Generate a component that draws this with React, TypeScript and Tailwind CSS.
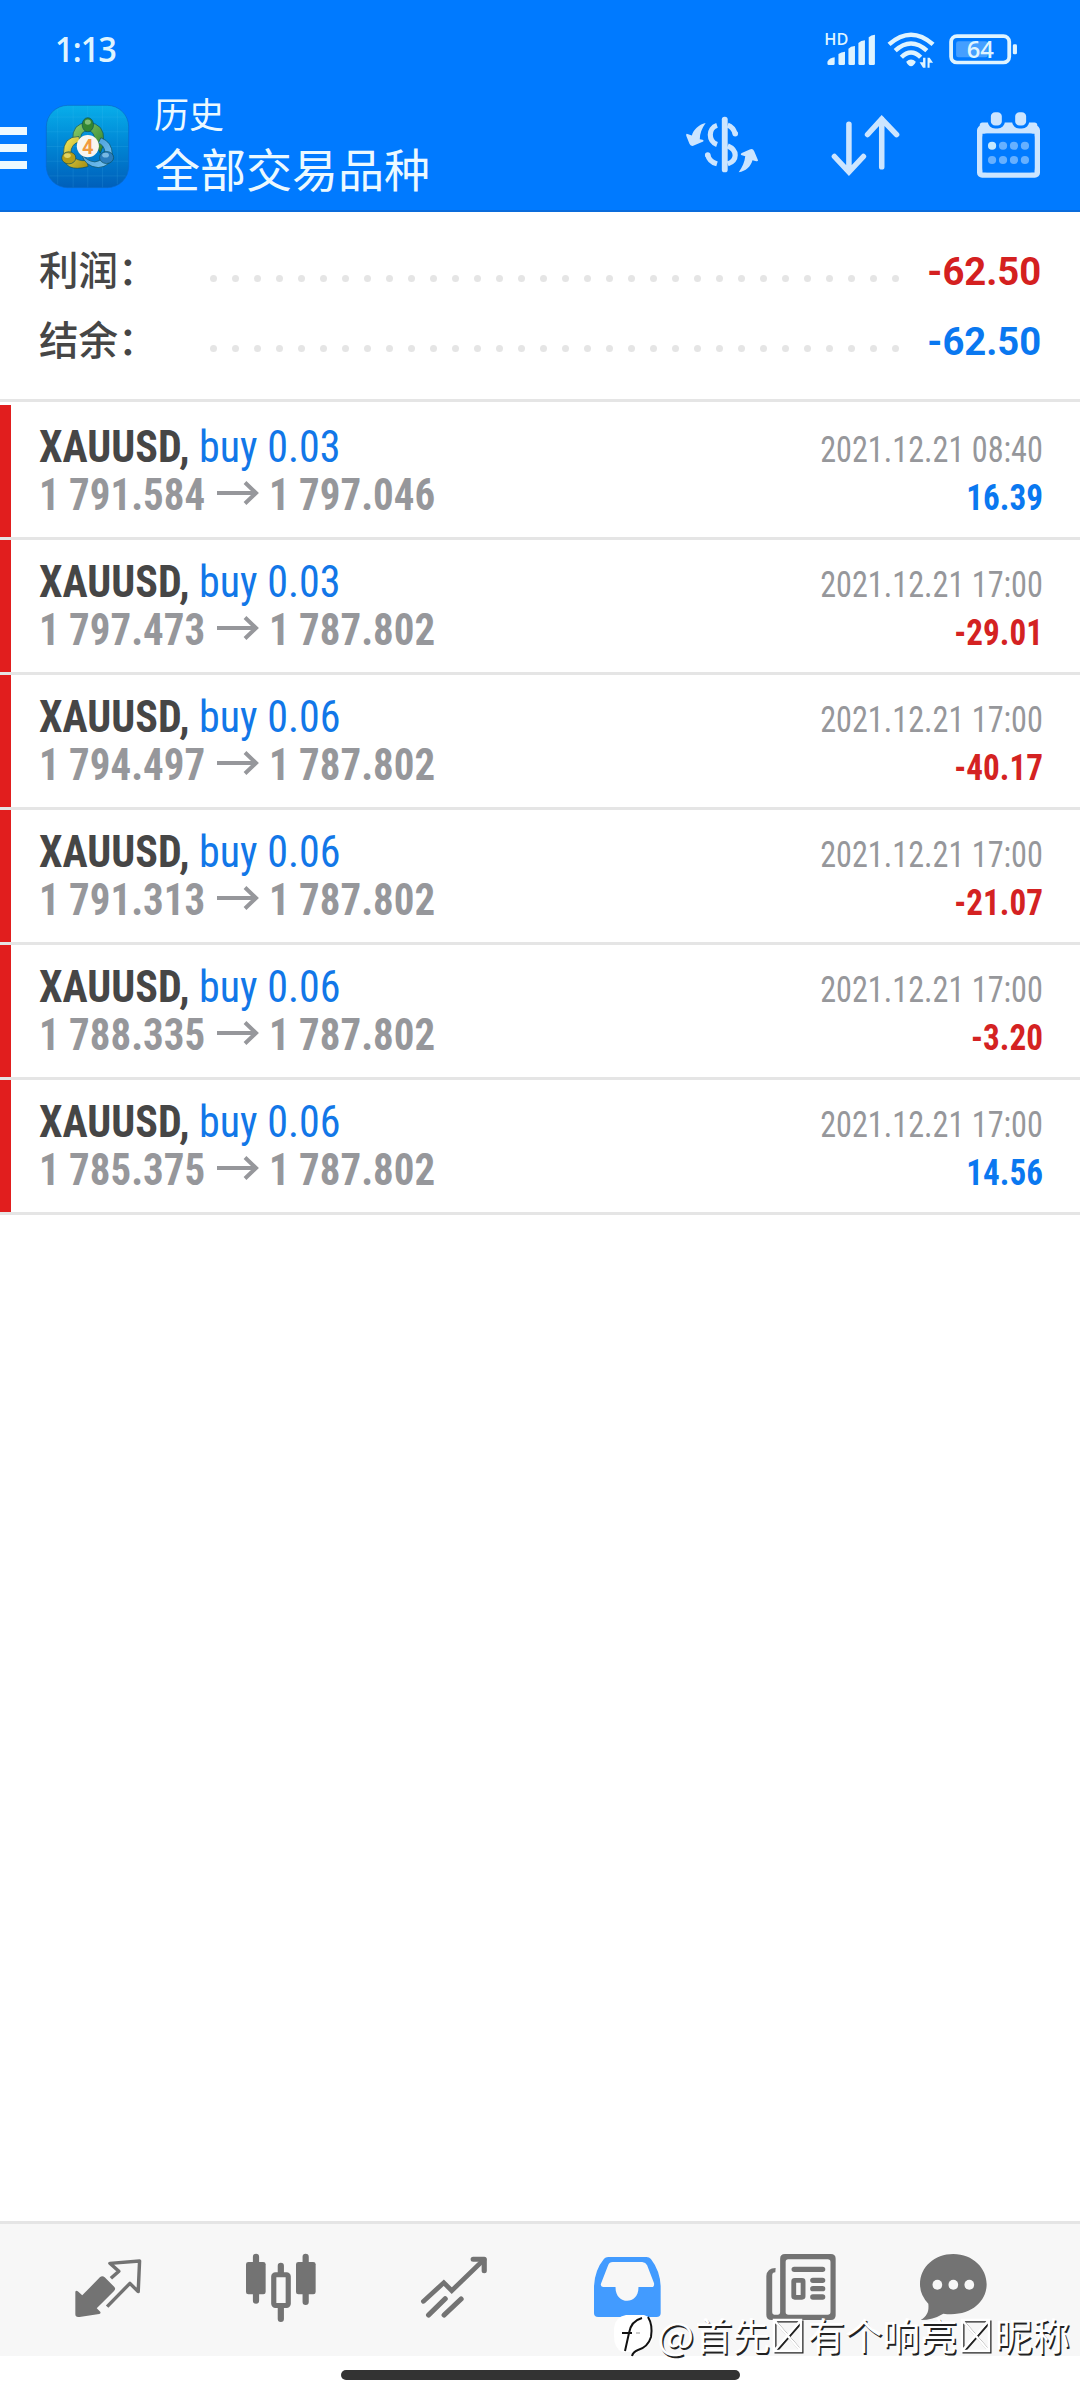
import type { ReactNode } from "react";

type Deal = {
    lot: string;
    open: string;
    close: string;
    time: string;
    profit: string;
};

const deals: Deal[] = [
    { lot: "0.03", open: "1 791.584", close: "1 797.046", time: "2021.12.21 08:40", profit: "16.39" },
    { lot: "0.03", open: "1 797.473", close: "1 787.802", time: "2021.12.21 17:00", profit: "-29.01" },
    { lot: "0.06", open: "1 794.497", close: "1 787.802", time: "2021.12.21 17:00", profit: "-40.17" },
    { lot: "0.06", open: "1 791.313", close: "1 787.802", time: "2021.12.21 17:00", profit: "-21.07" },
    { lot: "0.06", open: "1 788.335", close: "1 787.802", time: "2021.12.21 17:00", profit: "-3.20" },
    { lot: "0.06", open: "1 785.375", close: "1 787.802", time: "2021.12.21 17:00", profit: "14.56" },
];

const Icon = ({ box, className, children }: { box: string; className: string; children: ReactNode }) => (
    <svg viewBox={box} preserveAspectRatio="none" className={`block shrink-0 overflow-visible ${className}`} fill="none">
        {children}
    </svg>
);

const StatusBar = () => (
    <div className="flex h-[96px] items-start pl-[55px] pr-[62px] text-[#dff4ff]">
        <div className="mt-[29px] origin-left scale-x-[0.93] font-['Open_Sans',sans-serif] text-[35px] font-semibold leading-[40px] tracking-[-1px]">1:13</div>
        <Icon box="824 92 564 114" className="ml-auto mt-[31px] h-[38px] w-[194px]">
            <text x="825" y="135" fontSize="48" fontWeight="600" fontFamily="Open Sans, sans-serif" fill="currentColor" textLength="70" lengthAdjust="spacingAndGlyphs">HD</text>
            <g fill="currentColor">
                <path d="M834 190V184Q841 172 855 171V190Q855 194 851 194H838Q834 194 834 190Z" />
                <path d="M866 190V161Q874 155 885 154V190Q885 194 881 194H870Q866 194 866 190Z" />
                <path d="M895 190V145Q901 138 914 137V190Q914 194 910 194H899Q895 194 895 190Z" />
                <path d="M924 190V128Q931 121 943 120V190Q943 194 939 194H928Q924 194 924 190Z" />
                <path d="M954 190V111Q961 104 972 103V190Q972 194 968 194H958Q954 194 954 190Z" />
                <path d="M1063 184Q1077 171 1091 184Q1085 197 1077 198Q1069 197 1063 184Z" />
                <path d="M1112 172H1119V202H1112L1102 186H1112ZM1125 202V172H1131L1141 187H1131V202Z" />
                <rect x="1373" y="132" width="12" height="30" rx="4" />
                <rect x="1208" y="123" width="92" height="48" rx="7" fill="#459fff" />
            </g>
            <g stroke="currentColor">
                <path d="M1013 132Q1077 74 1141 132M1031 151Q1077 108 1123 151M1049 171Q1077 142 1105 171" strokeWidth="13" />
                <rect x="1193.500" y="107.500" width="169" height="79" rx="17" strokeWidth="11" />
            </g>
            <text x="1239" y="173" fontSize="68" fontWeight="600" fontFamily="Open Sans, sans-serif" fill="currentColor" textLength="79" lengthAdjust="spacingAndGlyphs">64</text>
        </Icon>
    </div>
);

const AppLogo = () => (
    <Icon box="50 44 248 248" className="ml-[19px] h-[83px] w-[83px]">
        <defs>
            <linearGradient id="tile" x1="0" y1="0" x2="0" y2="1">
                <stop offset="0" stopColor="#08aeea" />
                <stop offset="0.45" stopColor="#0088d6" />
                <stop offset="1" stopColor="#005fba" />
            </linearGradient>
            <linearGradient id="green" x1="0" y1="0" x2="1" y2="1">
                <stop offset="0" stopColor="#8fd06c" />
                <stop offset="1" stopColor="#2a7f2b" />
            </linearGradient>
            <linearGradient id="yellow" x1="0" y1="0" x2="1" y2="1">
                <stop offset="0" stopColor="#f3ea5c" />
                <stop offset="1" stopColor="#a58c10" />
            </linearGradient>
            <linearGradient id="sky" x1="0" y1="0" x2="1" y2="1">
                <stop offset="0" stopColor="#3a93d6" />
                <stop offset="1" stopColor="#7cc6f2" />
            </linearGradient>
        </defs>
        <rect x="51" y="45" width="246" height="246" rx="64" fill="url(#tile)" stroke="#0a68c8" strokeWidth="2" />
        <path d="M85 56V280M131 46V290M175 46V290M219 46V290M263 56V280M60 80H288M52 124H296M52 168H296M52 212H296M60 256H288" stroke="#5cc8f5" strokeOpacity="0.2" strokeWidth="2" />
        <g stroke="#0b4e5c" strokeWidth="2">
            <path d="M130 150Q126 98 176 96Q226 100 222 150Q222 170 212 188L196 154Q196 122 175 121Q154 122 154 142L138 154Z" fill="url(#green)" />
            <path d="M102 190Q101 138 148 138L152 154Q124 158 124 190Q140 214 172 210L176 228Q102 248 102 190Z" fill="url(#yellow)" />
            <path d="M156 190Q172 212 196 214Q224 210 226 182Q222 162 206 158L214 142Q248 154 248 192Q244 228 206 231Q166 228 156 190Z" fill="url(#sky)" />
            <ellipse cx="175" cy="103" rx="17" ry="21" fill="#328632" />
            <ellipse cx="118" cy="202" rx="21" ry="18" fill="#b59d18" />
            <ellipse cx="231" cy="201" rx="21" ry="18" fill="#2a7dbd" />
        </g>
        <ellipse cx="175" cy="95" rx="9" ry="8" fill="#a3d597" fillOpacity="0.7" />
        <ellipse cx="114" cy="195" rx="10" ry="7" fill="#f4eb84" fillOpacity="0.7" />
        <ellipse cx="228" cy="194" rx="10" ry="7" fill="#98d3f4" fillOpacity="0.7" />
        <circle cx="175" cy="167" r="33" fill="#f8f5f0" />
        <text x="175" y="189" textAnchor="middle" fontSize="60" fontWeight="700" fontFamily="Roboto, sans-serif" fill="#f19a3e">4</text>
    </Icon>
);

const Header = () => (
    <header className="h-[212px] border-b-2 border-[#0a6cdc] bg-[#007aff]">
        <StatusBar />
        <div className="flex h-[114px] items-start text-[#ecf9ff]">
            <div className="mt-[31px] flex w-[27px] flex-col gap-[9px]">
                <span className="h-2 bg-current" />
                <span className="h-2 bg-current" />
                <span className="h-2 bg-current" />
            </div>
            <div className="mt-[9px]">
                <AppLogo />
            </div>
            <div className="-mt-[2px] ml-[25px] font-['Noto_Sans_CJK_SC',sans-serif] font-normal">
                <div className="text-[35px] leading-[38px]">历史</div>
                <div className="mt-2 text-[46px] leading-[54px]">全部交易品种</div>
            </div>
            <div className="ml-auto mr-[40px] flex items-start text-[#cce5ff]">
                <Icon box="424 348 209 170" className="mt-5 h-[57px] w-[72px]">
                    <rect x="528" y="350" width="17" height="166" rx="8" fill="currentColor" />
                    <path d="M514 376C488 384 488 424 514 433M545 375C556 379 563 388 567 401M545 437C574 450 574 480 545 491M487 464C490 478 500 487 514 491" stroke="currentColor" strokeWidth="15" />
                    <circle cx="567" cy="401" r="8" fill="currentColor" />
                    <circle cx="487" cy="464" r="8" fill="currentColor" />
                    <path d="M481 369C460 374 446 389 441 406L426 401Q423 403 425 408L434 431Q437 439 445 437L474 424Q477 421 472 419L464 417C464 400 470 385 481 369Z" fill="currentColor" />
                    <path d="M577 516C588 500 594 485 596 468L584 464Q581 461 586 458L609 448Q618 444 622 453L633 480Q633 484 628 483L617 480C611 500 598 512 577 516Z" fill="currentColor" />
                </Icon>
                <Icon box="847 349 194 175" className="ml-[74px] mt-5 h-[59px] w-[67px]">
                    <path d="M896 373V514M854 469L896 515L938 469M991 500V358M950 404L991 358L1034 404" stroke="currentColor" strokeWidth="16" strokeLinecap="round" />
                </Icon>
                <Icon box="1268 335 184 197" className="ml-[78px] mt-4 h-[66px] w-[63px]">
                    <rect x="1276" y="382.500" width="168" height="141" rx="7" stroke="currentColor" strokeWidth="16" />
                    <rect x="1276" y="366" width="168" height="34" rx="8" fill="currentColor" />
                    <path d="M1284 412Q1284 399 1297 399H1423Q1436 399 1436 412V502Q1436 515 1423 515H1297Q1284 515 1284 502Z" fill="#007aff" />
                    <rect x="1304" y="331" width="41" height="49" rx="17" fill="currentColor" stroke="#007aff" strokeWidth="9" />
                    <rect x="1375" y="331" width="41" height="49" rx="17" fill="currentColor" stroke="#007aff" strokeWidth="9" />
                    <circle cx="1312" cy="436" r="12" fill="#c6e9ff" />
                    {[1344, 1376, 1408].map((x) => (
                        <circle key={x} cx={x} cy="436" r="12" fill="#66b0ff" />
                    ))}
                    {[1312, 1344, 1376, 1408].map((x) => (
                        <circle key={x} cx={x} cy="478" r="12" fill="#66b0ff" />
                    ))}
                </Icon>
            </div>
        </div>
    </header>
);

const SummaryRow = ({ label, value, color }: { label: string; value: string; color: string }) => (
    <div className="flex h-[70px] items-start">
        <div className="w-[171px] font-['Noto_Sans_CJK_SC',sans-serif] text-[39.5px] font-medium leading-[65px] text-[#464646]">{label}</div>
        <div className="mt-[40px] flex w-[689px] justify-between">
            {Array.from({ length: 32 }).map((_, i) => (
                <span key={i} className="size-[7px] rounded-full bg-[#e5e5e5]" />
            ))}
        </div>
        <div className={`ml-auto origin-right scale-x-[0.98] font-['Roboto',sans-serif] text-[39px] font-bold leading-[75px] ${color}`}>{value}</div>
    </div>
);

const DealRow = ({ deal }: { deal: Deal }) => (
    <div className="flex h-[135px] border-b-[3px] border-[#e5e5e5] font-['Roboto_Condensed','Roboto',sans-serif] [font-stretch:75%]">
        <div className="w-[11px] bg-[#e11e1e]" />
        <div className="ml-[28px] w-[420px] pt-[18px] text-[44px] leading-[48px]">
            <div className="origin-left scale-x-[0.955] whitespace-pre">
                <span className="font-bold text-[#464646]">XAUUSD,</span>
                <span className="font-[450] text-[#1277e8]"> buy {deal.lot}</span>
            </div>
            <div className="flex items-center font-bold text-[#96979b]">
                <span className="w-[178px] origin-left scale-x-[0.93] whitespace-nowrap">{deal.open}</span>
                <Icon box="0 0 42 24" className="-mt-1 h-6 w-[42px]">
                    <path d="M0 12H39M28 1.500L39 12L28 22.500" stroke="currentColor" strokeWidth="4" />
                </Icon>
                <span className="ml-[10px] origin-left scale-x-[0.93] whitespace-nowrap">{deal.close}</span>
            </div>
        </div>
        <div className="ml-auto mr-[37px] pt-[21px] text-right text-[36px] leading-[48px]">
            <div className="origin-right scale-x-[0.895] text-[#96979b]">{deal.time}</div>
            <div className={`origin-right scale-x-[0.92] font-bold ${deal.profit.startsWith("-") ? "text-[#d42222]" : "text-[#0a78f0]"}`}>{deal.profit}</div>
        </div>
    </div>
);

const TabBar = () => (
    <nav className="flex h-[135px] items-start border-t-[3px] border-[#e5e5e5] bg-[#f7f7f7] pt-[30px] text-[#737373]">
        <Icon box="218 162 194 204" className="ml-[75px] h-[68px] w-[67px]">
            <path d="M219 276Q220 270 226 274L239 286L290 232Q297 225 304 232L332 261Q337 267 331 273L281 325L291 335Q294 340 288 342L231 351Q219 353 219 343Z" fill="currentColor" />
            <path d="M322 235L345 214L319 190L405 183L401 275L377 250L311 320" stroke="currentColor" strokeWidth="10" strokeLinejoin="round" />
        </Icon>
        <Icon box="715 162 203 204" className="ml-[104px] h-[68px] w-[70px]">
            <path d="M744 170V302M888 170V306M816 197V222M816 320V357" stroke="currentColor" strokeWidth="18" strokeLinecap="round" />
            <rect x="715" y="186" width="57" height="97" rx="7" fill="currentColor" />
            <rect x="860" y="186" width="57" height="97" rx="7" fill="currentColor" />
            <rect x="795.500" y="224.500" width="42" height="92" rx="5" fill="#f7f7f7" stroke="currentColor" strokeWidth="15" />
        </Icon>
        <Icon box="1223 162 191 204" className="ml-[105px] h-[68px] w-[66px]">
            <path d="M1230 304L1289 248L1312 272L1405 179" stroke="currentColor" strokeWidth="14" strokeLinecap="round" />
            <path d="M1374 178H1406V212M1245 345L1293 296M1290 345L1339 297" stroke="currentColor" strokeWidth="15" strokeLinecap="round" strokeLinejoin="round" />
        </Icon>
        <Icon box="158 162 193 204" className="ml-[107px] h-[68px] w-[67px]">
            <path fillRule="evenodd" d="M158 258Q160 210 187 176Q191 171 199 171H309Q317 171 322 177Q348 212 350 258V340Q350 351 338 351H170Q158 351 158 340ZM199 195Q202 186 212 186H297Q307 187 311 196L331 250Q332 261 325 261H286C288 316 219 316 220 261H184Q176 260 178 251Z" fill="#429bff" />
        </Icon>
        <Icon box="656 162 203 204" className="ml-[105px] h-[68px] w-[70px]">
            <path d="M684 204L683 217Q674 217 674 226V337Q674 344 680 344H691Q697 344 697 337V176Q697 162 711 162H844Q858 162 858 176V346Q858 360 844 360H672Q657 360 657 345V228Q659 204 684 204ZM720 178Q713 178 713 186V336Q713 344 721 344H835Q843 344 843 336V186Q843 178 835 178Z" fillRule="evenodd" fill="currentColor" />
            <path d="M738 208H820M792 241H820M792 266H820M792 291H820" stroke="currentColor" strokeWidth="16" strokeLinecap="round" />
            <rect x="736.500" y="241" width="27" height="51" rx="3" stroke="currentColor" strokeWidth="14" />
        </Icon>
        <Icon box="1103 162 193 204" className="ml-[84px] h-[68px] w-[67px]">
            <path d="M1199 162C1256 162 1295 205 1295 253C1295 306 1246 352 1170 341Q1140 360 1105 360C1125 347 1129 332 1127 311Q1103 285 1103 253C1103 201 1145 162 1199 162Z" fill="currentColor" />
            {[1153, 1199, 1245].map((x) => (
                <ellipse key={x} cx={x} cy="254" rx="14" ry="15" fill="#f7f7f7" />
            ))}
        </Icon>
    </nav>
);

// square with a diagonal cross, stands in for glyphs the watermark font lacks
const MissingGlyph = () => (
    <Icon box="0 0 37.5 38" className="h-[38px] w-[37.5px]">
        <path d="M4 5H31V36H4ZM4 5L31 36M31 5L4 36" stroke="#222" strokeWidth="2" transform="translate(1.500 1.500)" />
        <path d="M4 5H31V36H4ZM4 5L31 36M31 5L4 36" stroke="#fff" strokeWidth="2.500" />
    </Icon>
);

const Watermark = () => (
    <div className="absolute bottom-[42px] right-[10px] flex h-[48px] items-center font-['Noto_Sans_CJK_SC',sans-serif] text-[37.5px] font-normal leading-[44px] text-white [text-shadow:1.5px_1.5px_0_#222]">
        <Icon box="0 0 44 48" className="mt-2 h-12 w-11">
            <path d="M12 1H30Q38 3 39 14V22Q38 33 26 36L19 42L17 38L8 38Q0 34 0 22V14Q1 3 12 1Z" fill="#fff" />
            <path d="M11 37L15 19Q17 7 28 4M8 19H18M34 3Q39 11 37 23Q34 33 24 36Q19 38 18 42" stroke="#111" strokeWidth="2" />
            <path d="M22 19H26" stroke="#ccc" strokeWidth="2" />
        </Icon>
        <span className="mr-[2px] inline-block scale-x-[1.04]">@</span>
        <span>首先</span>
        <MissingGlyph />
        <span>有个响亮</span>
        <MissingGlyph />
        <span>昵称</span>
    </div>
);

export default function App() {
    return (
        <div className="relative flex h-[2400px] w-[1080px] flex-col overflow-hidden bg-white">
            <Header />
            <section className="h-[190px] border-b-[3px] border-[#e5e5e5] pl-[39px] pr-[39px] pt-[23px]">
                <SummaryRow label="利润：" value="-62.50" color="text-[#d42020]" />
                <SummaryRow label="结余：" value="-62.50" color="text-[#0a78f0]" />
            </section>
            <main className="flex-1 pt-[3px]">
                {deals.map((deal, i) => (
                    <DealRow key={i} deal={deal} />
                ))}
            </main>
            <TabBar />
            <div className="flex h-[44px] justify-center pt-[14px]">
                <div className="h-[10px] w-[399px] rounded-full bg-[#333]" />
            </div>
            <Watermark />
        </div>
    );
}
